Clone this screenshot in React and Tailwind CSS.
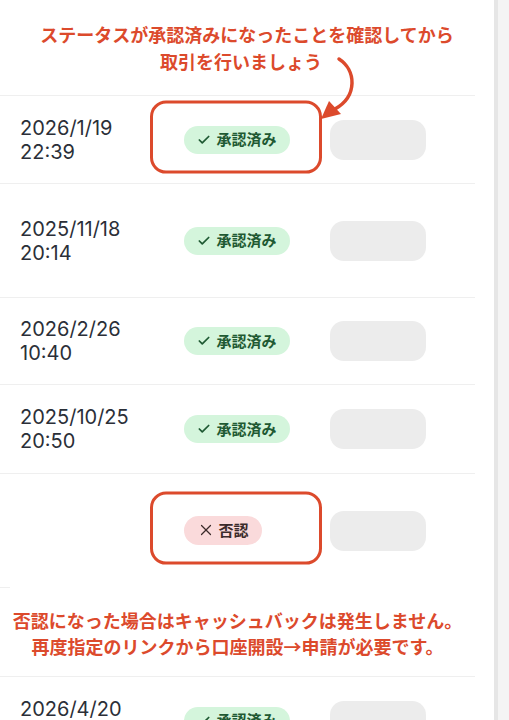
import React from 'react';
import { Check, X } from 'lucide-react';

const jp = "font-['Noto_Sans_CJK_JP',sans-serif]";

const rows = [
  { date: '2026/1/19', time: '22:39', status: 'ok', h: 'h-[88px]', mark: true },
  { date: '2025/11/18', time: '20:14', status: 'ok', h: 'h-[114px]' },
  { date: '2026/2/26', time: '10:40', status: 'ok', h: 'h-[87px]' },
  { date: '2025/10/25', time: '20:50', status: 'ok', h: 'h-[89px]' },
  { date: '', time: '', status: 'ng', h: 'h-[114px]', mark: true },
];

const StatusBadge = ({ status }) => {
  if (status === 'ng') {
    return (
      <span className={`inline-flex items-center gap-[3px] h-[29px] w-[78px] justify-center rounded-full bg-[#fadadb] text-[#3b2b2b] text-[15px] font-semibold ${jp}`}>
        <X className="w-[18px] h-[18px]" strokeWidth={1.6} />
        否認
      </span>
    );
  }
  return (
    <span className={`inline-flex items-center gap-[5px] h-[28px] w-[106px] justify-center rounded-full bg-[#d4f5dc] text-[#1f5a33] text-[15px] font-semibold ${jp}`}>
      <Check className="w-[14px] h-[14px]" strokeWidth={3} />
      承認済み
    </span>
  );
};

const Row = ({ row }) => (
  <div className={`relative w-[475px] ${row.h} border-t border-[#efefef] grid grid-cols-[164px_146px_96px] items-center pl-5`}>
    <div className="font-['Inter',sans-serif] text-[20px] leading-[24px] text-[#2b2f38]">
      {row.date && <div>{row.date}</div>}
      {row.time && <div>{row.time}</div>}
    </div>
    <div>
      <StatusBadge status={row.status} />
    </div>
    <div className="h-10 w-24 rounded-[14px] bg-[#ececec]" />
    {row.mark && (
      <div className="absolute left-[150px] top-1/2 -translate-y-[54%] h-[73px] w-[172px] rounded-[16px] border-[3.5px] border-[#dc4a2c]" />
    )}
  </div>
);

export default function App() {
  return (
    <div className="flex h-[720px] overflow-hidden bg-white">
      <div className="relative w-[494px]">
        <div className={`h-[95px] flex flex-col items-center justify-center text-[#dc4a2c] text-[18px] font-bold leading-[27px] ${jp}`}>
          <p>ステータスが承認済みになったことを確認してから</p>
          <p className="pr-3">取引を行いましょう</p>
        </div>

        {rows.map((row, i) => (
          <Row key={i} row={row} />
        ))}

        <div className="h-[89px] w-[475px] relative">
          <div className="h-px w-[10px] bg-[#efefef]" />
          <div className={`h-full flex flex-col items-center justify-center text-[#dc4a2c] text-[18px] font-bold leading-[26px] ${jp}`}>
            <p>否認になった場合はキャッシュバックは発生しません。</p>
            <p>再度指定のリンクから口座開設→申請が必要です。</p>
          </div>
        </div>

        <Row row={{ date: '2026/4/20', time: '19:02', status: 'ok', h: 'h-[88px]' }} />

        {/* arrow from the note to the first highlighted badge */}
        <svg className="absolute left-[300px] top-[40px]" width="70" height="90" viewBox="0 0 70 90" fill="none">
          <path d="M39 19 C 56 30, 58 56, 35 69" stroke="#dc4a2c" strokeWidth="3.5" strokeLinecap="round" />
          <path d="M21 79 L29 61 L41 74 Z" fill="#dc4a2c" />
        </svg>
      </div>
      <div className="w-[15px] border-l-4 border-[#e6e6e6] bg-[#f4f4f4]" />
    </div>
  );
}
